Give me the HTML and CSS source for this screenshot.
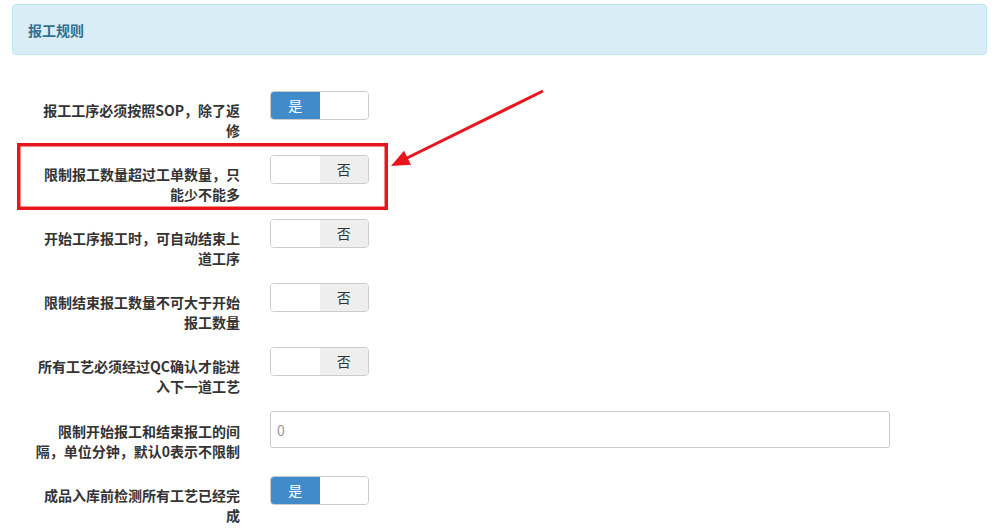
FILE: index.html
```html
<!doctype html>
<html lang="zh">
  <head>
    <meta charset="utf-8">
    <title>报工规则</title>
    <link rel="stylesheet" href="styles.css">
  </head>
  <body>
    <div class="page">
      <div class="panel">
        <div class="panel-heading">报工规则</div>
      </div>

      <form class="rules">
        <div class="row">
          <label class="row-label">报工工序必须按照SOP，除了返<br>修</label>
          <div class="switch on"><span class="sw-on">是</span><span class="sw-off"></span></div>
        </div>
        <div class="row">
          <label class="row-label">限制报工数量超过工单数量，只<br>能少不能多</label>
          <div class="switch off"><span class="sw-blank"></span><span class="sw-no">否</span></div>
        </div>
        <div class="row">
          <label class="row-label">开始工序报工时，可自动结束上<br>道工序</label>
          <div class="switch off"><span class="sw-blank"></span><span class="sw-no">否</span></div>
        </div>
        <div class="row">
          <label class="row-label">限制结束报工数量不可大于开始<br>报工数量</label>
          <div class="switch off"><span class="sw-blank"></span><span class="sw-no">否</span></div>
        </div>
        <div class="row">
          <label class="row-label">所有工艺必须经过QC确认才能进<br>入下一道工艺</label>
          <div class="switch off"><span class="sw-blank"></span><span class="sw-no">否</span></div>
        </div>
        <div class="row">
          <label class="row-label wide">限制开始报工和结束报工的间<br>隔，单位分钟，默认0表示不限制</label>
          <input class="text-input" type="text" placeholder="0">
        </div>
        <div class="row">
          <label class="row-label">成品入库前检测所有工艺已经完<br>成</label>
          <div class="switch on"><span class="sw-on">是</span><span class="sw-off"></span></div>
        </div>
      </form>

      <!-- annotation drawn over the form -->
      <svg class="markup" width="1006" height="531" viewBox="0 0 1006 531">
        <rect x="18.75" y="144.75" width="367.5" height="63.5" fill="none" stroke="#e8161c" stroke-width="3.5"/>
        <line x1="543" y1="91" x2="404" y2="159.5" stroke="#e8161c" stroke-width="3"/>
        <polygon points="391,166 411,164.8 404,150.8" fill="#e8161c"/>
      </svg>
    </div>
  </body>
</html>
```

FILE: styles.css
```css
html, body {
    margin: 0;
    background: #fff;
}

body {
    font-family: "Noto Sans CJK SC", "Liberation Sans", sans-serif;
    font-size: 14px;
    color: #333;
}

.page {
    position: relative;
    padding: 4px 19px 0 12px;
    height: 527px;
    overflow: hidden;
}

.panel {
    background-color: #d9edf7;
    border: 1px solid #bce8f1;
    border-radius: 4px;
}

.panel-heading {
    height: 49px;
    line-height: 50px;
    padding-left: 15px;
    font-weight: bold;
    color: #31708f;
}

.rules {
    margin: 36px 0 0;
}

.row {
    display: flex;
    align-items: flex-start;
    gap: 30px;
    min-height: 49px;
    margin-bottom: 15px;
}

.row-label {
    width: 228px;
    padding-top: 9px;
    text-align: right;
    line-height: 20px;
    font-weight: bold;
    color: #333;
}

.row-label.wide {
    padding-top: 10px;
}

.switch {
    display: flex;
    width: 97px;
    height: 27px;
    border: 1px solid #ccc;
    border-radius: 4px;
    overflow: hidden;
    line-height: 27px;
    text-align: center;
}

.switch span {
    flex: 1;
}

.sw-on {
    background-color: #428bca;
    color: #fff;
}

.sw-off, .sw-blank {
    background-color: #fff;
}

.sw-no {
    background-color: #eee;
    color: #333;
}

.text-input {
    box-sizing: border-box;
    width: 620px;
    height: 37px;
    margin: 0;
    padding: 0 6px;
    border: 1px solid #ccc;
    border-radius: 3px;
    font-family: inherit;
    font-size: 14px;
    color: #555;
    outline: none;
}

.text-input::placeholder {
    color: #999;
}

.markup {
    position: absolute;
    top: 0;
    left: 0;
    pointer-events: none;
}
```
